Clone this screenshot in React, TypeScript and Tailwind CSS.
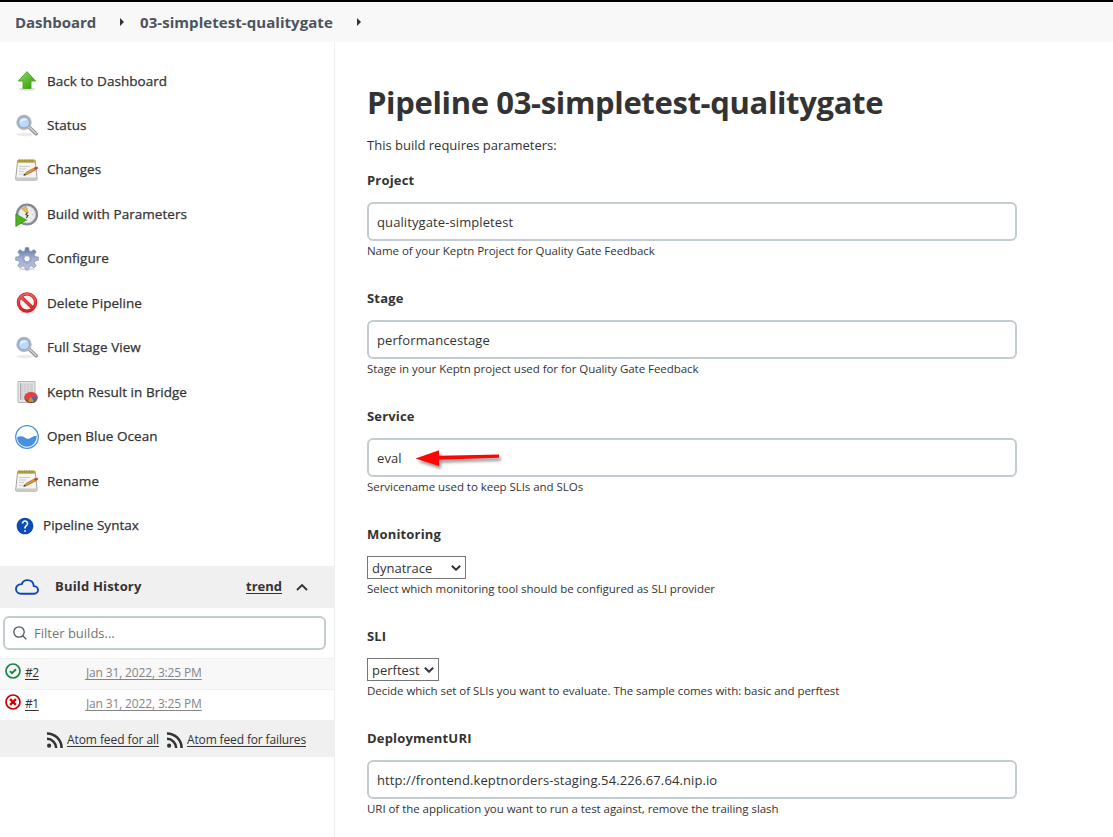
import React from "react";

function ArrowUp() {
  return (
    <svg width="24" height="24" viewBox="0 0 24 24">
      <defs>
        <linearGradient id="up" x1="0" y1="0" x2="1" y2="1">
          <stop offset="0" stopColor="#8fdc5a" />
          <stop offset="1" stopColor="#2f9a08" />
        </linearGradient>
      </defs>
      <ellipse cx="12" cy="20" rx="8" ry="1.6" fill="#000" opacity=".15" />
      <path d="M12 2.6 3.4 12H8v7.4h8V12h4.6z" fill="url(#up)" stroke="#4ba521" strokeWidth=".9" strokeLinejoin="round" />
    </svg>
  );
}

function Magnifier() {
  return (
    <svg width="24" height="24" viewBox="0 0 24 24">
      <ellipse cx="10" cy="20.5" rx="8.5" ry="1.7" fill="#000" opacity=".08" />
      <path d="m14.5 13.5 6.600 6.200" stroke="#8a8a8a" strokeWidth="3.600" strokeLinecap="round" />
      <path d="m14.8 13.6 6.200 5.900" stroke="#d2d2d2" strokeWidth="1.7" strokeLinecap="round" />
      <circle cx="9" cy="8.4" r="6.6" fill="#bcd8f6" stroke="#b4b6ba" strokeWidth="2.2" />
      <circle cx="9" cy="8.4" r="5.5" fill="none" stroke="#7da5dc" strokeWidth="1" />
      <path d="M5.200 9a4 4 0 0 1 4.600-4.500c2 .2 2.600 1.500.2 2-2 .4-3.200 1-4.800 2.500z" fill="#e6f2ff" />
    </svg>
  );
}

function Notepad() {
  return (
    <svg width="24" height="24" viewBox="0 0 24 24">
      <path d="M2.600 2.500h17.600l1.900 18.500a1 1 0 0 1-1 1.100H1.700a1 1 0 0 1-1-1.100z" fill="#f4f4f3" stroke="#a2a39f" strokeWidth="1" />
      <path d="M1 19.500h21l.2 2.500H.9z" fill="#c9cac7" />
      <path d="M3 1.500h17v3.200H3z" fill="#b7a440" />
      <path d="M4.500 1.500v2.500M7 1.500v2.500M9.500 1.500v2.500M12 1.500v2.500M14.500 1.500v2.500M17 1.500v2.500" stroke="#93873b" strokeWidth=".8" />
      <path d="M4 8.500h11M4 11h7M4 13.500h5M4 16.200h5" stroke="#cccccc" strokeWidth="1" />
      <path d="m8.800 17.200 2.200-2.800 8.700-4.700 1.200 2.100-8.700 4.600z" fill="#dc9836" stroke="#8c5a1d" strokeWidth=".6" />
      <path d="m8.300 17.600 1.500-1.900.9 1.500z" fill="#222" />
      <path d="m19 10 2.100-1.200c1.500-.7 2.600 1.300 1.400 2.100l-2.200 1.200z" fill="#d63b30" />
    </svg>
  );
}

function ClockPlay() {
  return (
    <svg width="24" height="24" viewBox="0 0 24 24">
      <circle cx="12" cy="11.500" r="9.900" fill="#eceeea" stroke="#85859a" strokeWidth="2.400" />
      <circle cx="12" cy="11.500" r="8.300" fill="none" stroke="#c9cad2" strokeWidth=".8" />
      <path d="m6.500 5.700 4.700-2.100 2.200 6.400-2.600-.4z" fill="#e0bf50" stroke="#b39a45" strokeWidth=".5" />
      <path d="m12.400 9.500-1.500 2 2 1-1.500 2.500" stroke="#3b3b3b" strokeWidth="1.200" fill="none" />
      <path d="M12 5v1M18 11.500h-1M12 18v-1M16.500 7l-.7.700M16.500 16l-.7-.7" stroke="#aaa" strokeWidth=".8" />
      <path d="M.8 11v12.500L11.500 17z" fill="#49b51b" stroke="#338a10" strokeWidth=".7" />
    </svg>
  );
}

function Gear() {
  return (
    <svg width="24" height="24" viewBox="0 0 24 24">
      <defs>
        <linearGradient id="gear" x1="0" y1="0" x2="0" y2="1">
          <stop offset="0" stopColor="#5c78ab" />
          <stop offset=".5" stopColor="#a2afd0" />
          <stop offset="1" stopColor="#bcc2d6" />
        </linearGradient>
      </defs>
      <ellipse cx="12" cy="22" rx="8" ry="1.500" fill="#000" opacity=".13" />
      <path
        d="M10.300.600h3.400l.5 3.200 1.900.8 3-2 2.200 2.300-2 2.700.8 1.900 3.400.6v3.200l-3.300.6-.8 1.900 1.900 2.800-2.300 2.300-2.700-1.900-2 .8-.6 3.100h-3.200l-.6-3.100-2-.8-2.700 1.900L2.700 18.600l1.900-2.800-.7-1.900-3.300-.6v-3.200l3.300-.6.8-1.900-2-2.700 2.300-2.300 2.900 2 1.900-.8z"
        fill="url(#gear)"
        stroke="#8391b5"
        strokeWidth=".6"
      />
      <circle cx="12" cy="11.700" r="5" fill="#93a2c6" opacity=".5" />
      <circle cx="12" cy="11.700" r="3.100" fill="#fff" stroke="#8592b4" strokeWidth=".8" />
    </svg>
  );
}

function Forbidden() {
  return (
    <svg width="24" height="24" viewBox="0 0 24 24">
      <defs>
        <linearGradient id="stop" gradientUnits="userSpaceOnUse" x1="0" y1="2" x2="0" y2="21">
          <stop offset="0" stopColor="#ee6a6a" />
          <stop offset="1" stopColor="#d81f22" />
        </linearGradient>
      </defs>
      <ellipse cx="12" cy="21.300" rx="7" ry="1.300" fill="#000" opacity=".15" />
      <circle cx="12" cy="11.500" r="8.600" fill="#f5f5f5" stroke="#c8191d" strokeWidth="3.300" />
      <path d="m6 5.700 12 11.600" stroke="#c8191d" strokeWidth="3.300" />
      <circle cx="12" cy="11.500" r="8.600" fill="none" stroke="url(#stop)" strokeWidth="1.900" />
      <path d="m6 5.700 12 11.600" stroke="url(#stop)" strokeWidth="2" />
    </svg>
  );
}

function Report() {
  return (
    <svg width="24" height="24" viewBox="0 0 24 24">
      <path d="M3 1.500h17v21H3z" fill="#e6e6e6" stroke="#b5b5b5" />
      <path d="M5 3.500h13v16H5z" fill="#c9c9c9" />
      <path d="M5 5.700h13M5 8h13M5 10.300h13M5 12.600h13M5 15h13M5 17.300h13M8.200 3.500v16M11.400 3.500v16M14.600 3.500v16" stroke="#dedede" strokeWidth=".8" />
      <path d="M5.500 3.500v16" stroke="#a9a9a9" />
      <ellipse cx="16" cy="17.800" rx="6.600" ry="5.300" fill="#a9292c" />
      <ellipse cx="16" cy="16.800" rx="6.500" ry="4.700" fill="#e04144" />
      <path d="m16 16.800 6.500-.1c0 2.200-1.500 3.900-3.700 4.700z" fill="#3f6cb4" />
      <path d="m16 16.800 2.800 4.700c-1.800.8-4.300.7-5.800-.2z" fill="#8bb532" />
    </svg>
  );
}

function Ocean() {
  return (
    <svg width="24" height="24" viewBox="0 0 24 24">
      <circle cx="12" cy="12" r="11.300" fill="#fff" stroke="#4a90e2" strokeWidth="1.300" />
      <path d="M2.100 12.300c1.800-1 3.900-1.500 5.800-.7 2 .8 3 2.400 5.200 2.100 3-.4 4.800-3.500 8.500-3 .4 6-4 11-9.600 11-5.500 0-9.700-4.200-9.900-9.400z" fill="#4a90e2" />
    </svg>
  );
}

function Help() {
  return (
    <svg width="20" height="20" viewBox="0 0 24 24">
      <path
        d="M12 2C6.480 2 2 6.480 2 12s4.480 10 10 10 10-4.480 10-10S17.520 2 12 2zm1 17h-2v-2h2v2zm2.070-7.750-.9.920C13.450 12.900 13 13.500 13 15h-2v-.5c0-1.100.450-2.100 1.170-2.830l1.240-1.260c.370-.360.590-.860.590-1.410 0-1.100-.9-2-2-2s-2 .9-2 2H8c0-2.210 1.790-4 4-4s4 1.790 4 4c0 .880-.360 1.680-.930 2.250z"
        fill="#0b4bb5"
      />
    </svg>
  );
}

function Cloud() {
  return (
    <svg width="24" height="16" viewBox="0 0 24 16" fill="none">
      <path
        d="M6 14.700h13c2.300 0 4-1.600 4-3.700 0-2.200-1.700-3.700-4.200-3.900C18.500 3.400 15.900 1.100 12.400 1.100c-2.700 0-4.800 1.500-5.700 4C3.400 5.300 1 7.200 1 10c0 2.700 2.200 4.700 5 4.700z"
        stroke="#0b4bb5"
        strokeWidth="1.900"
      />
    </svg>
  );
}

function Caret() {
  return (
    <svg width="4" height="8" viewBox="0 0 4 8">
      <path d="M0 0v8l4-4z" fill="#333" />
    </svg>
  );
}

function Feed() {
  return (
    <svg width="16" height="16" viewBox="0 0 16 16" fill="none" stroke="#333" strokeWidth="2.500">
      <path d="M0 1.400C8 1.400 14.600 8 14.600 16M0 6.800c5 0 9.200 4.200 9.200 9.200" />
      <circle cx="2.100" cy="13.700" r="2.100" fill="#333" stroke="none" />
    </svg>
  );
}

function SuccessMark() {
  return (
    <svg width="16" height="16" viewBox="0 0 16 16" fill="none" stroke="#138347">
      <circle cx="8" cy="8" r="7" strokeWidth="1.700" />
      <path d="m4.900 8.100 2.100 2.100 4-4" strokeWidth="2" />
    </svg>
  );
}

function FailureMark() {
  return (
    <svg width="16" height="16" viewBox="0 0 16 16" fill="none" stroke="#cc0003">
      <circle cx="8" cy="8" r="7" strokeWidth="1.700" />
      <path d="m5.100 5.100 5.800 5.800M10.900 5.100l-5.800 5.800" strokeWidth="2.200" />
    </svg>
  );
}

const tasks = [
  { icon: <ArrowUp />, label: "Back to Dashboard" },
  { icon: <Magnifier />, label: "Status" },
  { icon: <Notepad />, label: "Changes" },
  { icon: <ClockPlay />, label: "Build with Parameters" },
  { icon: <Gear />, label: "Configure" },
  { icon: <Forbidden />, label: "Delete Pipeline" },
  { icon: <Magnifier />, label: "Full Stage View" },
  { icon: <Report />, label: "Keptn Result in Bridge" },
  { icon: <Ocean />, label: "Open Blue Ocean" },
  { icon: <Notepad />, label: "Rename" },
];

function Task({ icon, label }: { icon: React.ReactNode; label: string }) {
  return (
    <a className="flex h-[44.45px] items-center gap-2 pl-[15px] text-[13.5px] tracking-[0.04px] [-webkit-text-stroke:0.25px_#333]">
      {icon}
      <span className="pb-px">{label}</span>
    </a>
  );
}

function Build({ mark, id, shade }: { mark: React.ReactNode; id: string; shade: string }) {
  return (
    <div className={`flex h-[31px] items-center border-t border-[#f0f0f0] pb-0.5 pl-[5px] text-[12px] ${shade}`}>
      <span className="-mt-[3px]">{mark}</span>
      <a className="ml-1 w-[61px] tracking-[-0.4px] underline underline-offset-2">{id}</a>
      <a className="tracking-[-0.15px] text-[#858585] underline underline-offset-2">Jan 31, 2022, 3:25 PM</a>
    </div>
  );
}

function Sidebar() {
  return (
    <aside className="w-[335px] shrink-0 border-r border-[#f0f0f0] pt-[17px]">
      <nav>
        {tasks.map((t) => (
          <Task key={t.label} icon={t.icon} label={t.label} />
        ))}
        <Task icon={<Help />} label="Pipeline Syntax" />
      </nav>
      <section className="mt-[18px]">
        <div className="flex h-[42px] items-center bg-[#f0f0f0] pl-[15px] text-[13px] font-bold">
          <Cloud />
          <span className="ml-4 flex-1 tracking-[0.18px]">Build History</span>
          <a className="underline underline-offset-2">trend</a>
          <svg className="mr-[26px] ml-[14px]" width="12" height="8" viewBox="0 0 12 8" fill="none">
            <path d="m1 7 5-5 5 5" stroke="#333" strokeWidth="1.900" />
          </svg>
        </div>
        <div className="mt-2 mb-2 ml-[3px] flex h-[34px] w-[323px] items-center rounded-[6px] border-2 border-[#c3ccd1] pl-2">
          <svg width="14" height="14" viewBox="0 0 14 14" fill="none" stroke="#4d545d" strokeWidth="1.300">
            <circle cx="6" cy="6" r="5.200" />
            <path d="m9.700 9.700 3.700 3.700" />
          </svg>
          <input className="ml-[7px] flex-1 bg-transparent pt-0.5 text-[13px] outline-none placeholder:text-[#757575]" placeholder="Filter builds..." />
        </div>
        <Build mark={<SuccessMark />} id="#2" shade="bg-[#f8f8f8]" />
        <Build mark={<FailureMark />} id="#1" shade="bg-white" />
        <div className="flex h-[37px] items-center bg-[#f0f0f0] pt-[3px] pl-[47px] text-[12px] tracking-[-0.08px]">
          <Feed />
          <a className="ml-1 w-[92px] whitespace-nowrap underline underline-offset-2">Atom feed for all</a>
          <span className="ml-2 flex"><Feed /></span>
          <a className="ml-1 tracking-[-0.14px] underline underline-offset-2">Atom feed for failures</a>
        </div>
      </section>
    </aside>
  );
}

function Field({ name, help, children }: { name: string; help: string; children: React.ReactNode }) {
  return (
    <div className="mb-[27px]">
      <div className="mb-3 h-5 text-[13px] leading-5 font-bold tracking-[0.18px]">{name}</div>
      {children}
      <div className="h-5 text-[11.5px] leading-5 tracking-[-0.045px]">{help}</div>
    </div>
  );
}

function TextBox({ value }: { value: string }) {
  return (
    <input
      defaultValue={value}
      className="block h-[39px] w-[650px] rounded-[6px] border-2 border-[#c3ccd1] px-2 text-[13px] tracking-[0.1px] outline-none"
    />
  );
}

function Select({ value, width }: { value: string; width: string }) {
  return (
    <div className={`flex h-[23px] items-center justify-between border border-[#767676] pr-1 pl-1 text-[13px] ${width}`}>
      <span className="pt-0.5">{value}</span>
      <svg width="10" height="6" viewBox="0 0 10 6" fill="none">
        <path d="m.8.8 4.200 4 4.200-4" stroke="#333" strokeWidth="1.900" />
      </svg>
    </div>
  );
}

function Pointer() {
  return (
    <svg className="absolute top-[8px] left-[46px] drop-shadow-[2px_3px_1.500px_rgba(0,0,0,0.4)]" width="94" height="28" viewBox="0 0 94 28">
      <path d="m2.500 12.500 23.500-8.300v5.600l60-1.300v3.200l-60 2v6.300z" fill="#ff0505" />
    </svg>
  );
}

export default function App() {
  return (
    <div className="flex h-[837px] w-[1113px] flex-col overflow-hidden bg-white font-['Open_Sans','Noto_Sans',sans-serif] text-[#333]">
      <header className="flex h-[42px] shrink-0 items-center border-t-2 border-black bg-[#f8f8f8] pl-[15px] text-[15px] font-bold text-[#4d545d]">
        <a className="w-[81px] pt-px tracking-[-0.05px]">Dashboard</a>
        <span className="mr-4 ml-6 flex"><Caret /></span>
        <a className="w-[193px] pt-px tracking-[0.06px] whitespace-nowrap">03-simpletest-qualitygate</a>
        <span className="ml-6 flex"><Caret /></span>
      </header>
      <div className="flex flex-1">
        <Sidebar />
        <main className="pt-[37px] pl-8">
          <h1 className="h-12 text-[31px] leading-[46px] font-bold tracking-[-0.35px]">Pipeline 03-simpletest-qualitygate</h1>
          <p className="mt-2 mb-[15px] h-5 text-[13px] leading-5">This build requires parameters:</p>
          <Field name="Project" help="Name of your Keptn Project for Quality Gate Feedback">
            <TextBox value="qualitygate-simpletest" />
          </Field>
          <Field name="Stage" help="Stage in your Keptn project used for for Quality Gate Feedback">
            <TextBox value="performancestage" />
          </Field>
          <Field name="Service" help="Servicename used to keep SLIs and SLOs">
            <div className="relative">
              <TextBox value="eval" />
              <Pointer />
            </div>
          </Field>
          <Field name="Monitoring" help="Select which monitoring tool should be configured as SLI provider">
            <Select value="dynatrace" width="w-[99px]" />
          </Field>
          <Field name="SLI" help="Decide which set of SLIs you want to evaluate. The sample comes with: basic and perftest">
            <Select value="perftest" width="w-[72px]" />
          </Field>
          <Field name="DeploymentURI" help="URI of the application you want to run a test against, remove the trailing slash">
            <TextBox value="http://frontend.keptnorders-staging.54.226.67.64.nip.io" />
          </Field>
        </main>
      </div>
    </div>
  );
}
